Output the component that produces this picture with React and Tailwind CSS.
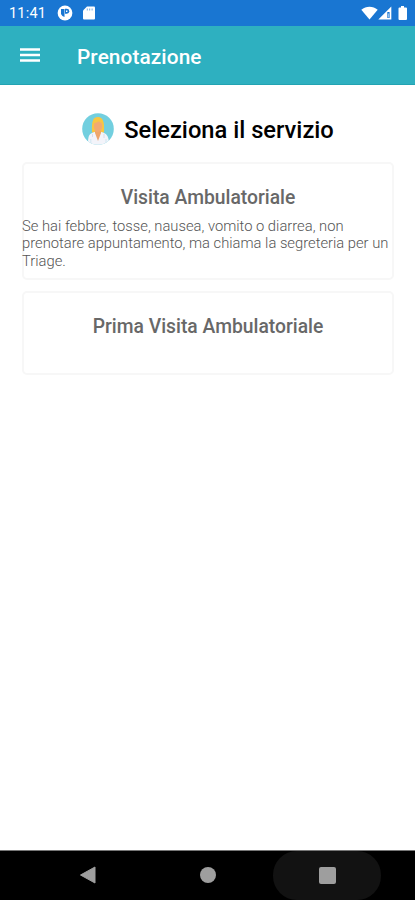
const services = [
  {
    title: "Visita Ambulatoriale",
    note: "Se hai febbre, tosse, nausea, vomito o diarrea, non prenotare appuntamento, ma chiama la segreteria per un Triage.",
    box: "h-[118px]",
  },
  { title: "Prima Visita Ambulatoriale", box: "h-[84px]" },
];

const StatusBar = () => {
  return (
    <div className="flex h-[26px] items-center bg-[#1976d2] pl-[9px] pr-[7px] text-white">
      <span className="w-[48px] whitespace-nowrap pt-[3px] text-[14.5px] leading-none tracking-[0.2px]">
        11:41
      </span>
      <svg viewBox="0 0 16 16" className="h-4 w-4">
        <circle cx="8" cy="8" r="7.4" fill="#fff" />
        <path d="M4 4h3.500v8a5 5 0 0 1-3.500-3z" fill="#1976d2" />
        <path d="M8 3.800h1.800a2.400 2.400 0 0 1 0 4.900H8z" fill="#1976d2" />
        <path d="M9 5.500h1.400v1.500H9z" fill="#fff" />
      </svg>
      <svg viewBox="0 0 12 14" className="ml-[10px] h-[14px] w-3">
        <path d="M4 0.500h7a1 1 0 0 1 1 1v11a1 1 0 0 1-1 1H1a1 1 0 0 1-1-1V4.500z" fill="#fff" />
        <path d="M4.300 2.500v2M6.700 2.500v2M9.100 2.500v2" stroke="#1976d2" strokeWidth="0.600" />
      </svg>
      <div className="ml-auto flex items-center">
        <svg viewBox="0 0 17 14" className="h-[14px] w-[17px]">
          <path d="M0.300 3.700C5 -0.300 12 -0.300 16.700 3.700L8.500 13.500z" fill="#fff" />
        </svg>
        <svg viewBox="0 0 14 14" className="h-[14px] w-[14px]">
          <path d="M13.300 0.500v13H0.300z" fill="#fff" />
          <path d="M9.300 6h2.300v6H9.300z" fill="#1976d2" />
          <path d="M10.400 7.500v4" stroke="#fff" strokeWidth="0.600" />
        </svg>
        <svg viewBox="0 0 10 14" className="ml-[6px] h-[14px] w-[10px]">
          <path d="M3 0h3v1.500h2a1 1 0 0 1 1 1V13a1 1 0 0 1-1 1H1.500a1 1 0 0 1-1-1V2.500a1 1 0 0 1 1-1H3z" fill="#fff" />
        </svg>
      </div>
    </div>
  );
};

const DoctorAvatar = () => {
  return (
    <svg viewBox="0 0 32 32" className="h-8 w-8">
      <clipPath id="avatar">
        <circle cx="16" cy="16" r="15.800" />
      </clipPath>
      <g clipPath="url(#avatar)">
        <rect width="32" height="32" fill="#72cfdf" />
        <path d="M10 19.500C9.500 8 11 4 16 4s6.500 4.500 6 15.500z" fill="#f8c642" />
        <path d="M6 32c0-8 .5-11 5-12.500l5-1.500 5 1.500c4.500 1.500 6 5 6 12.500z" fill="#f3f4fa" />
        <path d="M13 15h6v5l-3 8-3-8z" fill="#efa66b" />
        <ellipse cx="16" cy="13" rx="4.200" ry="6" fill="#f2aa73" />
        <path d="M11.500 10.500C11.500 7 14 5.500 17 5.500c2 .5 3.500 2 3.500 4.500-1.800-.2-3-1-4-1.800-1 1-3 1.800-5 2.300z" fill="#f8c642" />
        <path d="M10.500 21v3M22 21v4" stroke="#d3d5e6" strokeWidth="0.800" fill="none" />
        <path d="M8.800 26v6M24 26v6" stroke="#c5e3ef" strokeWidth="0.800" />
      </g>
    </svg>
  );
};

const App = () => {
  return (
    <div className="flex h-[900px] w-[415px] flex-col overflow-hidden bg-white font-['Roboto',sans-serif]">
      <StatusBar />
      <header className="flex h-[59px] items-center border-b border-[#22a3b2] bg-[#2eb0c0] pl-5 text-white">
        <svg viewBox="0 0 20 14" className="mr-[37px] h-[14px] w-5">
          <path d="M0 1.400h20M0 7h20M0 12.600h20" stroke="#fff" strokeWidth="2.500" />
        </svg>
        <h1 className="whitespace-nowrap pt-[3px] text-[20.800px] font-medium leading-6 tracking-[0.1px]">
          Prenotazione
        </h1>
      </header>
      <main className="flex-1 pl-[22px] pr-[21px] pt-7">
        <div className="flex h-8 items-center justify-center gap-[10px]">
          <DoctorAvatar />
          <h2 className="whitespace-nowrap pt-[1px] text-[23.700px] font-medium leading-8 text-black">
            Seleziona il servizio
          </h2>
        </div>
        <div className="mt-[17px] flex flex-col gap-[11px]">
          {services.map(({ title, note, box }) => (
            <div key={title} className={`${box} rounded-[5px] border-2 border-[#f7f7f7] pt-[22px]`}>
              <h3 className="whitespace-nowrap text-center text-[19.300px] font-medium leading-6 text-[#686868]">
                {title}
              </h3>
              {note && (
                <p className="-mx-[2px] mt-[7.500px] text-[14.750px] font-light leading-[17.500px] text-[#555]">
                  {note}
                </p>
              )}
            </div>
          ))}
        </div>
      </main>
      <nav className="flex h-[50px] items-center border-t border-[#777] bg-black pl-[34px]">
        <div className="flex w-[107px] justify-center">
          <svg viewBox="0 0 16 18" className="-mt-px h-[18px] w-4">
            <path d="M15 1v16L0.500 9z" fill="#9e9e9e" stroke="#9e9e9e" strokeLinejoin="round" />
          </svg>
        </div>
        <div className="ml-[13px] flex w-[107px] justify-center">
          <span className="-mt-px h-4 w-4 rounded-full bg-[#9e9e9e]" />
        </div>
        <div className="ml-[12px] flex h-full w-[108px] items-center justify-center rounded-[24px] bg-[#121212]">
          <span className="-mt-px h-[17px] w-[17px] rounded-[2px] bg-[#9e9e9e]" />
        </div>
      </nav>
    </div>
  );
};

export default App;
